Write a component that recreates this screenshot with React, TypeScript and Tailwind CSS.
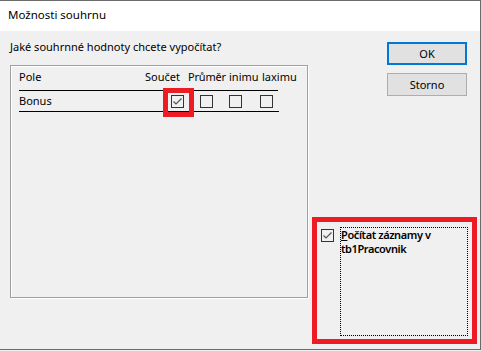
import React from "react";

function Box({ checked }: { checked?: boolean }) {
  return (
    <div className="w-[13px] h-[13px] border border-[#333333] shrink-0 relative">
      {checked && (
        <svg width="11" height="11" viewBox="0 0 11 11" className="absolute left-0 top-0">
          <polyline points="1.5,5.5 4,8 9.5,2.5" fill="none" stroke="#555555" strokeWidth="1.2" />
        </svg>
      )}
    </div>
  );
}

export default function App() {
  return (
    <div
      className="w-[481px] h-[351px] bg-[#f0f0f0] text-black text-[11px] leading-[16px]"
      style={{ fontFamily: '"Noto Sans", "Open Sans", sans-serif' }}
    >
      <div className="w-[481px] h-[350px] border-t border-r border-b border-[#6b6b6b] flex flex-col">
        <div className="h-[30px] bg-white pl-[8px] pt-[6px] shrink-0 text-[11.5px]">Možnosti souhrnu</div>
        <div className="flex flex-1">
          <div className="w-[309px] pl-[10px] pt-[8px] shrink-0">
            <div className="whitespace-nowrap">Jaké souhrnné hodnoty chcete vypočítat?</div>
            <div className="relative mt-[10px] w-[298px] h-[233px] border border-[#a0a0a0] shadow-[inset_1px_1px_0_#ffffff,1px_1px_0_#ffffff] pl-[8px]">
              <div className="w-[259px] flex pt-[3px] pb-[5px] border-b border-black whitespace-nowrap">
                <div className="w-[126px] shrink-0">Pole</div>
                <div className="w-[43px] shrink-0">Součet</div>
                <div className="w-[41px] shrink-0 tracking-[-0.2px]">Průměr</div>
                <div className="w-[33px] shrink-0">inimu</div>
                <div className="shrink-0">laximu</div>
              </div>
              <div className="w-[260px] flex items-center pt-[2px] pb-[2px] border-b border-black">
                <div className="w-[152px] shrink-0">Bonus</div>
                <Box checked />
                <div className="ml-[16px]"><Box /></div>
                <div className="ml-[16px]"><Box /></div>
                <div className="ml-[18px]"><Box /></div>
              </div>
              <div className="absolute left-[152px] top-[22px] w-[31px] h-[29px] border-[5px] border-[#ed1c24]" />
            </div>
          </div>
          <div className="relative flex-1 flex flex-col">
            <div className="ml-[78px] mt-[11px] w-[80px]">
              <div className="h-[23px] border-2 border-[#0078d7] bg-[#e1e1e1] flex items-center justify-center">OK</div>
              <div className="mt-[8px] h-[23px] border border-[#adadad] bg-[#e1e1e1] flex items-center justify-center">Storno</div>
            </div>
            <div className="ml-[12px] mt-[131px] flex">
              <div className="mt-[2px]"><Box checked /></div>
              <div className="ml-[6px] w-[128px] h-[109px] border border-dotted border-black text-[11px] leading-[14px] font-semibold tracking-[-0.4px]">
                <span className="underline">P</span>očítat záznamy v<br />tb1Pracovnik
              </div>
            </div>
            <div className="absolute left-[3px] top-[186px] w-[165px] h-[127px] border-[5px] border-[#ed1c24]" />
          </div>
        </div>
      </div>
    </div>
  );
}
